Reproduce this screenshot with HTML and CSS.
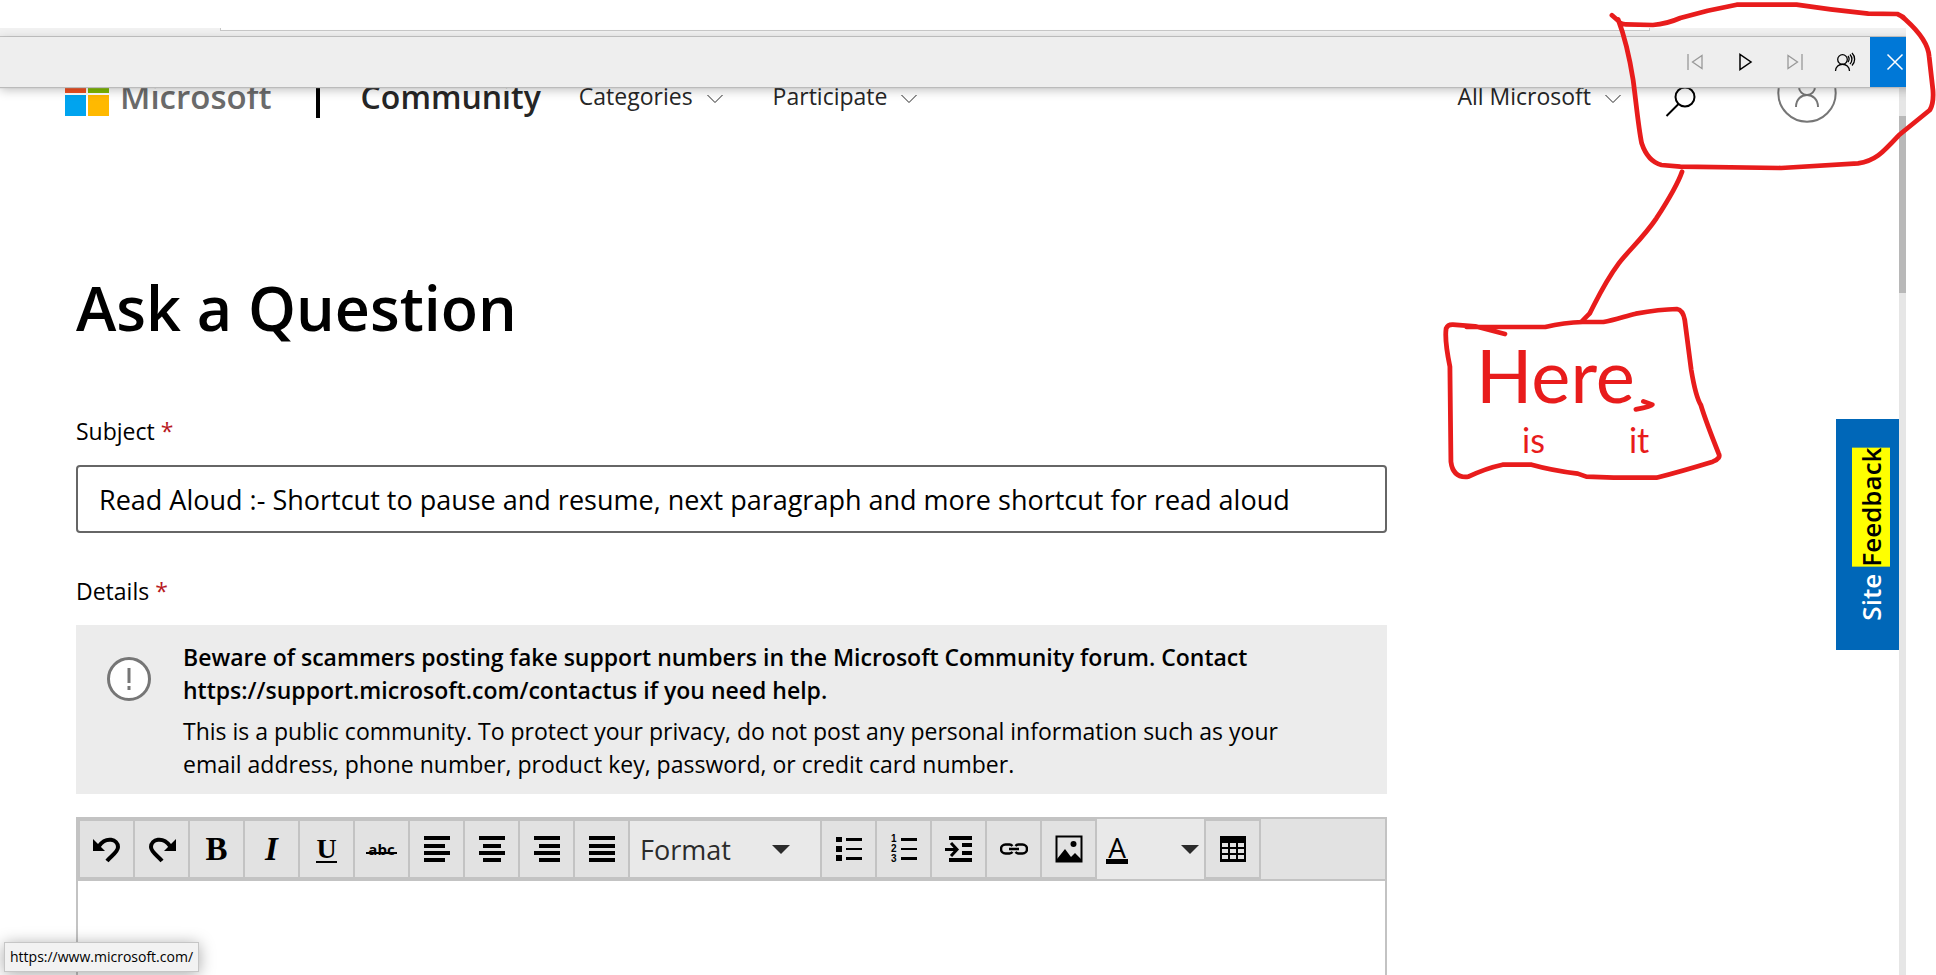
FILE: index.html
```html
<!DOCTYPE html>
<html lang="en">
<head>
<meta charset="utf-8">
<title>Ask a Question - Microsoft Community</title>
<link rel="stylesheet" href="styles.css">
</head>
<body>
<div class="window">
  <div class="tabstrip"><div class="tab-edge"></div></div>
  <div class="reader">
    <button class="reader-btn dim" aria-label="Previous paragraph"><svg width="18" height="18" viewBox="0 0 18 18"><path d="M2 1v16M16 2.500v13L6.500 9z"/></svg></button>
    <button class="reader-btn" aria-label="Play"><svg width="18" height="18" viewBox="0 0 18 18"><path d="M4 1.500v15L15 9z"/></svg></button>
    <button class="reader-btn dim" aria-label="Next paragraph"><svg width="18" height="18" viewBox="0 0 18 18"><path d="M16 1v16M2 2.500v13L11.500 9z"/></svg></button>
    <button class="reader-btn voice" aria-label="Voice options"><svg width="22" height="20" viewBox="0 0 22 20"><circle cx="8.500" cy="7.500" r="4.800"/><path d="M1.500 19c0-9 14-9 14 0M14 4c1.500 2 1.500 4 0 6M16 2.500c2.500 3 2.500 6.500 0 9.500M18 1c3.500 3.500 3.500 9 0 12.500"/></svg></button>
    <button class="reader-btn close" aria-label="Close"><svg width="18" height="18" viewBox="0 0 18 18"><path d="M1.500 1.500l15 15M16.500 1.500l-15 15"/></svg></button>
  </div>
  <div class="viewport">
    <div class="page">
      <header class="site-header">
        <a class="brand" href="#">
          <svg width="44" height="45" viewBox="0 0 44 45"><path fill="#f25022" d="M0 0h21v22H0z"/><path fill="#7fba00" d="M23 0h21v22H23z"/><path fill="#00a4ef" d="M0 24h21v21H0z"/><path fill="#ffb900" d="M23 24h21v21H23z"/></svg>
          <span>Microsoft</span>
        </a>
        <span class="divider"></span>
        <a class="community" href="#">Community</a>
        <nav class="menu">
          <button class="menu-btn">Categories <svg width="16" height="10" viewBox="0 0 16 10"><path d="M.5 1L8 8.500 15.500 1"/></svg></button>
          <button class="menu-btn">Participate <svg width="16" height="10" viewBox="0 0 16 10"><path d="M.5 1L8 8.500 15.500 1"/></svg></button>
        </nav>
        <button class="menu-btn all">All Microsoft <svg width="16" height="10" viewBox="0 0 16 10"><path d="M.5 1L8 8.500 15.500 1"/></svg></button>
        <button class="icon-btn search" aria-label="Search"><svg width="32" height="32" viewBox="0 0 32 32"><circle cx="20" cy="12" r="9.500"/><path d="M13.500 19L1.500 31"/></svg></button>
        <button class="icon-btn account" aria-label="Account"><svg width="60" height="60" viewBox="0 0 60 60"><circle cx="30" cy="30" r="28.700"/><circle cx="30" cy="24" r="8"/><path d="M19 44c0-16 22-16 22 0"/></svg></button>
      </header>
      <main class="content">
        <h1>Ask a Question</h1>
        <form class="form">
          <label class="label" for="subject">Subject <span class="req">*</span></label>
          <input class="subject" id="subject" type="text" value="Read Aloud :- Shortcut to pause and resume, next paragraph and more shortcut for read aloud">
          <label class="label" for="details">Details <span class="req">*</span></label>
          <div class="notice">
            <svg class="notice-icon" width="44" height="44" viewBox="0 0 44 44"><circle cx="22" cy="22" r="20.500" fill="#fff" stroke="#767676" stroke-width="3"/><path d="M22 11v15M22 29v4" stroke="#767676" stroke-width="3"/></svg>
            <div class="notice-text">
              <p class="strong">Beware of scammers posting fake support numbers in the Microsoft Community forum. Contact<br>https://support.microsoft.com/contactus if you need help.</p>
              <p>This is a public community. To protect your privacy, do not post any personal information such as your<br>email address, phone number, product key, password, or credit card number.</p>
            </div>
          </div>
          <div class="editor">
            <div class="toolbar">
              <button type="button" class="tool" aria-label="Undo"><svg width="28" height="28" viewBox="0 0 28 28"><path d="M6 11C13 1 25 4 25 12c0 5-7 9-11 14" fill="none" stroke="#000" stroke-width="4"/><path d="M0 4v12h12z"/></svg></button>
              <button type="button" class="tool" aria-label="Redo"><svg width="28" height="28" viewBox="0 0 28 28"><path d="M22 11C15 1 3 4 3 12c0 5 7 9 11 14" fill="none" stroke="#000" stroke-width="4"/><path d="M28 4v12H16z"/></svg></button>
              <button type="button" class="tool bold">B</button>
              <button type="button" class="tool italic">I</button>
              <button type="button" class="tool underline"><span>U</span></button>
              <button type="button" class="tool strike"><span>abc</span></button>
              <button type="button" class="tool" aria-label="Align left"><svg width="28" height="28" viewBox="0 0 28 28"><path d="M1 1h26v4H1zM1 9h21v4H1zM1 16h26v4H1zM1 23h21v4H1z"/></svg></button>
              <button type="button" class="tool" aria-label="Center"><svg width="28" height="28" viewBox="0 0 28 28"><path d="M1 1h26v4H1zM5 9h18v4H5zM1 16h26v4H1zM5 23h18v4H5z"/></svg></button>
              <button type="button" class="tool" aria-label="Align right"><svg width="28" height="28" viewBox="0 0 28 28"><path d="M1 1h26v4H1zM6 9h21v4H6zM1 16h26v4H1zM6 23h21v4H6z"/></svg></button>
              <button type="button" class="tool" aria-label="Justify"><svg width="28" height="28" viewBox="0 0 28 28"><path d="M1 1h26v4H1zM1 9h26v4H1zM1 16h26v4H1zM1 23h26v4H1z"/></svg></button>
              <button type="button" class="tool format">Format <svg width="18" height="9" viewBox="0 0 18 9"><path d="M0 0h18L9 9z" fill="#2b2b2b"/></svg></button>
              <button type="button" class="tool" aria-label="Bulleted list"><svg width="28" height="28" viewBox="0 0 28 28"><path d="M1 2h6v5H1zM1 11h6v6H1zM1 20h6v6H1zM11 3h16v3H11zM11 13h16v2H11zM11 22h16v3H11z"/></svg></button>
              <button type="button" class="tool" aria-label="Numbered list"><svg width="28" height="34" viewBox="0 0 28 34"><path d="M11 6h16v3H11zM11 16h16v2H11zM11 25h16v3H11z"/><g class="digits"><text x="1" y="10">1</text><text x="1" y="20">2</text><text x="1" y="30">3</text></g></svg></button>
              <button type="button" class="tool" aria-label="Indent"><svg width="28" height="28" viewBox="0 0 28 28"><path d="M4 1h23v4H4zM17 8h10v4H17zM17 16h10v4H17zM4 23h23v4H4zM0 13h10v3H0z"/><path d="M6 8l6 6.500L6 21" fill="none" stroke="#000" stroke-width="3"/></svg></button>
              <button type="button" class="tool" aria-label="Link"><svg width="28" height="28" viewBox="0 0 28 28"><g fill="none" stroke="#000" stroke-width="2.500"><path d="M12.500 11a4.500 4.500 0 0 0-3-1.500h-4a4.500 4.500 0 0 0 0 9h4a4.500 4.500 0 0 0 3-1.500M15.500 11a4.500 4.500 0 0 1 3-1.500h4a4.500 4.500 0 0 1 0 9h-4a4.500 4.500 0 0 1-3-1.500M9 14h10"/></g></svg></button>
              <button type="button" class="tool" aria-label="Image"><svg width="28" height="28" viewBox="0 0 28 28"><path d="M1.500 1.500h25v25h-25z" fill="none" stroke="#000" stroke-width="2"/><path d="M2 27v-3l8-10 6 8 4-4 6 6v3z"/><circle cx="18.500" cy="9" r="3"/></svg></button>
              <button type="button" class="tool color"><span class="swatch">A</span><svg width="18" height="9" viewBox="0 0 18 9"><path d="M0 0h18L9 9z" fill="#2b2b2b"/></svg></button>
              <button type="button" class="tool" aria-label="Table"><svg width="28" height="28" viewBox="0 0 28 28"><path d="M1 1h26v26H1zM3 8v4h6V8zM11 8v4h6V8zM19 8v4h6V8zM3 14v4h6v-4zM11 14v4h6v-4zM19 14v4h6v-4zM3 20v4h6v-4zM11 20v4h6v-4zM19 20v4h6v-4z" fill-rule="evenodd"/></svg></button>
              <span class="filler"></span>
            </div>
            <textarea class="details" id="details"></textarea>
          </div>
        </form>
      </main>
      <a class="feedback" href="#"><span>Site <mark>Feedback</mark></span></a>
    </div>
    <div class="scrollbar"><div class="thumb"></div></div>
    <div class="status">https://www.microsoft.com/</div>
  </div>
</div>
<svg class="ink" viewBox="0 0 1568 1500" preserveAspectRatio="none">
  <path d="M620 46L636 60Q645 73 660 73L740 75Q780 72 820 54L900 32L985 14L1160 14L1260 28L1370 41L1455 42Q1470 48 1480 60Q1545 120 1548 170L1559 270Q1562 310 1550 330L1460 405C1410 460 1390 483 1340 490L1115 504L820 500L765 495Q725 485 707 430C697 380 690 300 682 240Q665 130 638 58"/>
  <path d="M825 515Q810 560 750 655C710 715 670 750 640 790C600 845 580 890 555 940L533 963"/>
  <path d="M195 981L425 981Q480 967 535 966L595 966C630 960 660 948 690 941Q760 928 810 927Q828 930 833 960L852 1110Q865 1190 880 1215Q895 1265 932 1360Q940 1375 915 1385Q820 1415 750 1433L625 1433L545 1430L520 1421Q440 1410 385 1394L300 1394Q250 1405 200 1430Q155 1435 149 1385L146 1100Q130 1020 135 985Q140 973 155 974L220 979L307 1002"/>
  <path d="M712 1204L738 1214Q735 1220 690 1228"/>
</svg>
<div class="note"><span class="note-big">Here</span><span class="note-small"><span>is</span><span>it</span></span></div>
</body>
</html>
```
FILE: styles.css
```css
* { box-sizing: border-box; }
body {
  margin: 0;
  height: 100vh;
  overflow: hidden;
  position: relative;
  background: #fff;
  color: #000;
  font-family: "Open Sans", "Noto Sans", sans-serif;
}
button { font: inherit; color: inherit; background: none; border: 0; padding: 0; margin: 0; }
a { color: inherit; text-decoration: none; }
h1, p { margin: 0; }

.window {
  height: 100%;
  margin-right: 30px;
  padding-top: 28px;
  display: flex;
  flex-direction: column;
  overflow: hidden;
}
.tabstrip {
  flex: none;
  height: 9px;
  padding: 0 256px 0 220px;
  background: #f1f1f1;
  border-bottom: 1px solid #c8c8c8;
}
.tab-edge { height: 3px; background: #fff; border: 1px solid #c8c8c8; border-top: 0; }
.reader {
  flex: none;
  height: 50px;
  display: flex;
  justify-content: flex-end;
  margin-right: -14px;
  background: #eee;
  box-shadow: 0 1px 1px #bbb, 0 3px 10px rgba(0, 0, 0, .25);
  position: relative;
  z-index: 2;
}
.reader-btn { width: 50px; display: grid; place-items: center; }
.reader-btn svg { fill: none; stroke: #000; stroke-width: 1.5; }
.reader-btn.dim svg { stroke: #999; stroke-width: 1.3; }
.reader-btn.voice svg { stroke-width: 1.3; }
.reader-btn.close { background: #0078d7; }
.reader-btn.close svg { stroke: #fff; }

.viewport { flex: 1; min-height: 0; display: flex; position: relative; }
.page { flex: 1; min-width: 0; position: relative; display: flex; flex-direction: column; }
.scrollbar { width: 7px; background: #e6e6e6; padding-top: 29px; }
.thumb { height: 177px; background: #b8b8b8; }

.site-header {
  flex: none;
  height: 100px;
  margin-top: -44px;
  padding: 0 62px 0 65px;
  display: flex;
  align-items: center;
  color: #262626;
}
.brand { display: flex; align-items: center; gap: 11px; font-size: 33px; font-weight: 600; color: #6b6b6b; }
.divider { width: 4px; height: 50px; margin: 0 41px 0 44px; background: #000; }
.community { font-size: 32px; font-weight: 600; margin-right: 38px; }
.menu { display: flex; gap: 50px; }
.menu-btn { display: flex; align-items: center; gap: 14px; font-size: 23px; white-space: nowrap; }
.menu-btn svg { fill: none; stroke: #262626; margin-top: 6px; }
.brand span, .community, .menu-btn { padding-top: 6px; }
.all { margin-left: auto; margin-right: 44px; }
.icon-btn { display: grid; place-items: center; }
.icon-btn svg { fill: none; stroke: #000; stroke-width: 2; }
.search { margin-right: 80px; margin-top: 16px; }
.account svg { stroke: #767676; }

.content { flex: 1; min-height: 0; padding: 123px 512px 0 76px; display: flex; flex-direction: column; }
h1 { font-size: 61px; line-height: 84px; font-weight: 600; }
.form { flex: 1; min-height: 0; display: flex; flex-direction: column; margin-top: 65px; }
.label { font-size: 23px; line-height: 32px; margin-bottom: 18px; }
.req { color: #b8191f; }
.subject {
  height: 68px;
  margin-bottom: 42px;
  padding: 0 21px;
  border: 2px solid #666;
  border-radius: 4px;
  font: 27px "Open Sans", "Noto Sans", sans-serif;
  color: #000;
}
.notice { display: flex; gap: 32px; height: 169px; padding: 16px 31px; background: #ececec; margin-bottom: 23px; }
.notice-icon { flex: none; margin-top: 16px; }
.notice-text { font-size: 23px; line-height: 33px; white-space: nowrap; }
.strong { font-weight: 600; margin-bottom: 8px; }

.editor { flex: 1; min-height: 0; display: flex; flex-direction: column; border: 2px solid #c3c3c3; border-bottom: 0; }
.toolbar { display: flex; gap: 2px; background: #c3c3c3; padding-left: 2px; border-bottom: 2px solid #c3c3c3; }
.tool { flex: none; width: 53px; height: 56px; margin: 2px 0; background: #e2e2e2; display: grid; place-items: center; color: #000; }
.bold { font: bold 33px "Liberation Serif", serif; }
.italic { font: italic bold 33px "Liberation Serif", serif; }
.underline { font: bold 28px "Liberation Serif", serif; }
.underline span { border-bottom: 2px solid #000; line-height: 25px; }
.strike { font-size: 15px; font-weight: 700; }
.strike span { padding: 0 2px; background: linear-gradient(#000, #000) 0 13px / 100% 2px no-repeat; }
.digits { font: bold 10px "Liberation Sans", sans-serif; }
.format { width: 190px; padding: 0 30px 0 10px; display: flex; align-items: center; justify-content: space-between; background: #e9e9e9; font-size: 27px; color: #2b2b2b; }
.color { width: 107px; height: 60px; margin: 0; padding: 0 5px 0 9px; display: flex; align-items: center; justify-content: space-between; background: #e9e9e9; }
.swatch { width: 22px; font-size: 28px; line-height: 24px; border-bottom: 5px solid #000; text-align: center; }
.filler { flex: 1; background: #e2e2e2; }
.details { flex: 1; min-height: 0; border: 0; resize: none; outline: 0; }

.feedback {
  position: absolute;
  right: 0;
  top: 332px;
  width: 63px;
  height: 231px;
  padding-left: 7px;
  display: flex;
  align-items: center;
  justify-content: center;
  background: #0067b8;
  color: #fff;
  font-size: 26px;
  font-weight: 600;
}
.feedback span { writing-mode: vertical-rl; transform: rotate(180deg); }
.feedback mark { background: #ff0; color: #000; padding: 0 1px; }
.status {
  position: absolute;
  left: 4px;
  bottom: 3px;
  padding: 0 5px;
  font-size: 14px;
  line-height: 28px;
  background: #f2f2f2;
  border: 1px solid #c6c6c6;
  box-shadow: 0 2px 16px rgba(0, 0, 0, .35);
}
.ink { position: absolute; right: 0; top: 0; width: 536px; height: 500px; z-index: 3; pointer-events: none; fill: none; stroke: #e81c1c; stroke-width: 14; stroke-linecap: round; stroke-linejoin: round; }
.note { position: absolute; z-index: 3; top: 330px; right: 266px; width: 194px; color: #e81c1c; font-family: Lato, sans-serif; }
.note-big { display: block; font-size: 74px; line-height: 89px; }
.note-small { display: flex; gap: 84px; padding-left: 46px; font-size: 34px; line-height: 41px; }
```
